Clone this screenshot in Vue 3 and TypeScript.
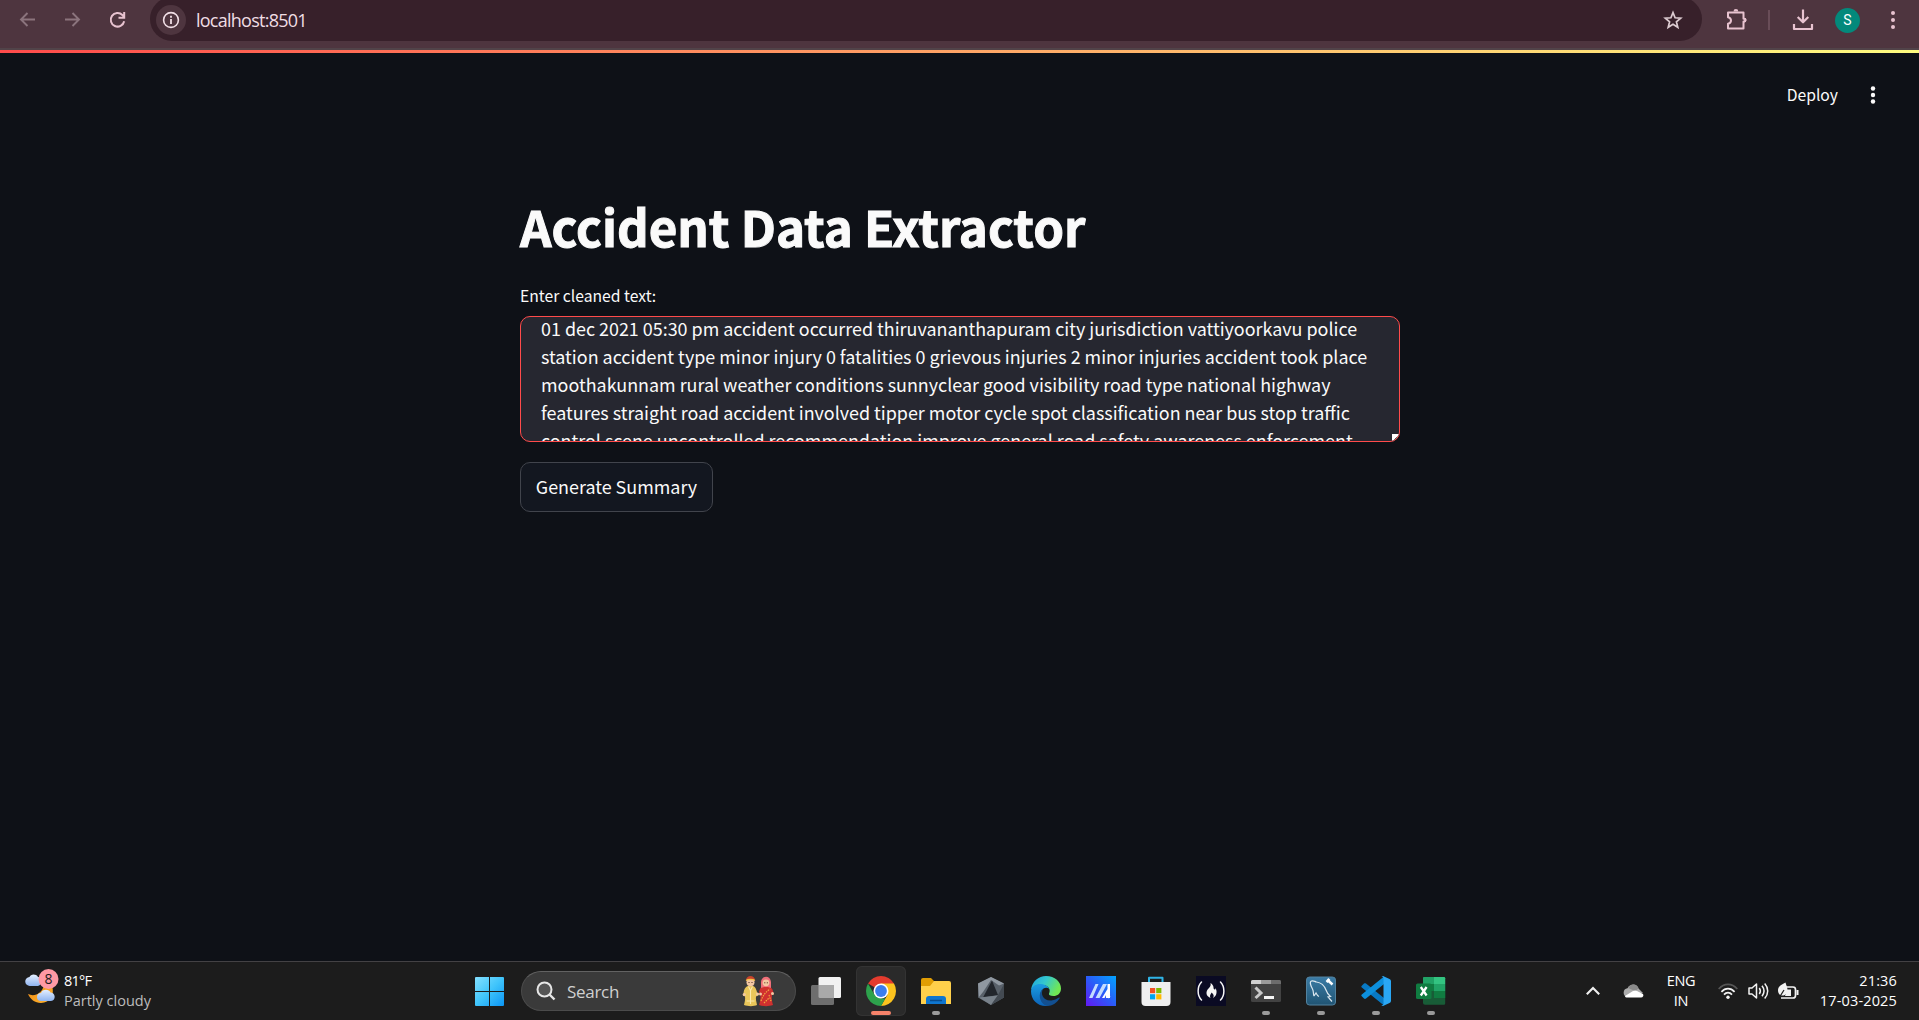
<script setup lang="ts">
interface TaskApp {
  id: string
  running: boolean
  active?: boolean
}

const lines: string[] = [
  '01 dec 2021 05:30 pm accident occurred thiruvananthapuram city jurisdiction vattiyoorkavu police',
  'station accident type minor injury 0 fatalities 0 grievous injuries 2 minor injuries accident took place',
  'moothakunnam rural weather conditions sunnyclear good visibility road type national highway',
  'features straight road accident involved tipper motor cycle spot classification near bus stop traffic',
  'control scene uncontrolled recommendation improve general road safety awareness enforcement',
]

const apps: TaskApp[] = [
  { id: 'taskview', running: false },
  { id: 'chrome', running: true, active: true },
  { id: 'explorer', running: true },
  { id: 'armoury', running: false },
  { id: 'edge', running: false },
  { id: 'myasus', running: false },
  { id: 'store', running: false },
  { id: 'fcc', running: false },
  { id: 'terminal', running: true },
  { id: 'mysql', running: true },
  { id: 'vscode', running: true },
  { id: 'excel', running: true },
]
</script>

<template>
  <div class="screen">
    <header class="toolbar">
      <nav class="nav">
        <svg width="20" height="20" viewBox="0 0 20 20" fill="none" stroke="#8b747d" stroke-width="1.9"><path d="M17 9.500H3.500M9.500 3 3 9.500l6.500 6.500" /></svg>
        <svg width="20" height="20" viewBox="0 0 20 20" fill="none" stroke="#8b747d" stroke-width="1.9"><path d="M2 9.500h13.500M9.500 3 16 9.500 9.500 16" /></svg>
        <svg width="20" height="20" viewBox="0 0 20 20" fill="none" stroke="#e8c3d0" stroke-width="2"><path d="M16.200 11.300A6.800 6.800 0 1 1 14.400 5L16.100 6.900M16.200 2V7.700H10.500" /></svg>
      </nav>
      <div class="omnibox">
        <span class="info">
          <svg width="18" height="18" viewBox="0 0 18 18"><circle cx="9" cy="9" r="7.400" fill="none" stroke="#f1dfe6" stroke-width="1.600" /><path d="M9 8v5M9 4.800v1.900" stroke="#f1dfe6" stroke-width="1.800" /></svg>
        </span>
        <span class="url">localhost:8501</span>
        <svg class="star" width="20" height="20" viewBox="0 0 20 20" fill="none" stroke="#dccbd1" stroke-width="1.700"><path d="M10 2.600l2.100 5.200 5.600.4-4.300 3.600 1.400 5.500L10 14.300l-4.800 3 1.400-5.500L2.300 8.200l5.600-.4z" /></svg>
      </div>
      <div class="tools">
        <svg width="22" height="22" viewBox="0 0 22 22" fill="none" stroke="#e8c3d0" stroke-width="2" stroke-linejoin="round"><path d="M2 3.500h15.500v6.200c2.500-.5 2.500 3.200 0 2.800v7H2v-4.800c4-.8 4-5.600 0-6.400z" /><path d="M7.500 2.500a2.400 2.400 0 0 1 4.800 0zM18.200 8.700a2.300 2.300 0 0 1 0 4.600z" fill="#e8c3d0" stroke="none" /></svg>
        <i class="sep"></i>
        <svg class="dl" width="22" height="22" viewBox="0 0 22 22" fill="none" stroke="#e8c3d0" stroke-width="2.200"><path d="M11 .5v13M5.700 8l5.300 5.300L16.300 8M2 15v5h18v-5" stroke-linejoin="round" /></svg>
        <span class="avatar">S</span>
        <svg class="kebab" width="6" height="20" viewBox="0 0 6 20" fill="#e8c3d0"><circle cx="3" cy="3" r="2" /><circle cx="3" cy="10" r="2" /><circle cx="3" cy="17" r="2" /></svg>
      </div>
    </header>
    <div class="rainbow"></div>

    <main class="page">
      <div class="appbar">
        <span>Deploy</span>
        <svg width="6" height="20" viewBox="0 0 6 20" fill="#fafafa"><circle cx="3" cy="3.500" r="2.200" /><circle cx="3" cy="10" r="2.200" /><circle cx="3" cy="16.500" r="2.200" /></svg>
      </div>
      <section class="column">
        <h1>Accident Data Extractor</h1>
        <label>Enter cleaned text:</label>
        <div class="textarea">
          <div class="scroll">
            <p v-for="line in lines" :key="line">{{ line }}</p>
          </div>
          <svg class="grip" width="7" height="7" viewBox="0 0 7 7"><path d="M0 0h7v3L3 7H0z" fill="#fff" /><path d="M2 6l3-3M4.500 6.500L7 4" stroke="#555" stroke-width="1" /></svg>
        </div>
        <button>Generate Summary</button>
      </section>
    </main>

    <footer class="taskbar">
      <div class="weather">
        <svg width="36" height="38" viewBox="0 0 36 38">
          <defs>
            <linearGradient id="cl" x1="0" y1="0" x2="0" y2="1"><stop offset="0" stop-color="#e4efff" /><stop offset="1" stop-color="#8fb4f0" /></linearGradient>
            <linearGradient id="mo" x1="0" y1="0" x2="1" y2="1"><stop offset="0" stop-color="#f08a16" /><stop offset="1" stop-color="#ffb52e" /></linearGradient>
          </defs>
          <path d="M3 26c6 3 14 0 16-9l8 1c3 8-2 17-11 17-6 0-11-4-13-9z" fill="url(#mo)" />
          <path d="M5 18a4.500 4.500 0 0 1-.5-9C5.500 6 11 5.500 13 9c4 0 5 8 0 9z" fill="url(#cl)" />
          <path d="M16 33a4 4 0 0 1 0-8c1-4 8-4.500 9.500-.5 5 0 6 8 .5 8.500z" fill="url(#cl)" />
          <circle cx="23.500" cy="11" r="10" fill="#ff99a4" />
          <text x="23.500" y="16" text-anchor="middle" font-family="Open Sans, sans-serif" font-size="14" fill="#1c1c1c">8</text>
        </svg>
        <div class="wtext"><b>81°F</b><span>Partly cloudy</span></div>
      </div>

      <div class="center">
        <div class="start">
          <svg width="29" height="29" viewBox="0 0 29 29">
            <defs><linearGradient id="win" x1="0" y1="0" x2="1" y2="1"><stop offset="0" stop-color="#84e0ff" /><stop offset=".5" stop-color="#3fc4fb" /><stop offset="1" stop-color="#0b95f5" /></linearGradient></defs>
            <path d="M1 0h13v14H0V1a1 1 0 0 1 1-1zM15 0h13a1 1 0 0 1 1 1v13H15zM0 15h14v14H1a1 1 0 0 1-1-1zM15 15h14v13a1 1 0 0 1-1 1H15z" fill="url(#win)" />
          </svg>
        </div>
        <div class="search">
          <svg width="20" height="20" viewBox="0 0 20 20" fill="#555" stroke="#e6e6e6" stroke-width="2"><circle cx="8.500" cy="8.500" r="7" /><path d="M13.500 13.500l5 5" stroke-width="2.400" /></svg>
          <span>Search</span>
          <svg class="couple" width="33" height="32" viewBox="0 0 33 32">
            <path d="M6.500 11c-2 0-3.500 1.500-4.500 4.500l-1 5 2 1c.5 3-.5 6-1 8.500 4 1.500 10 1.500 13 0-.5-3-1.500-5.500-1-8.500l2-1-1.500-5c-1-3-2-4.500-4-4.500z" fill="#e9c65a" />
            <path d="M6.500 11.500l2 4 2-4M8.500 15v14M4.500 26h8" stroke="#fbe9ad" stroke-width="1.100" fill="none" />
            <circle cx="8.500" cy="7.300" r="4" fill="#f3c8a2" /><path d="M4 5.500c0-6 9-6 9 0-2-1.200-7-1.200-9 0z" fill="#c9442c" /><path d="M4 5.400c2-1.300 7-1.300 9 0" stroke="#f4c44b" stroke-width="1.200" fill="none" /><path d="M6.500 7.500h1M9.500 7.500h1" stroke="#4a2c1c" stroke-width="1" />
            <path d="M19.500 12c-1.500 1-2 3-2.500 5l1.500 3c0 4-.5 7-1.500 10 4 1.500 10 1.500 14 0-1-3-1.500-7-1-10l1.500-2c-.5-3-1.500-5-3.500-6z" fill="#d0302f" />
            <path d="M19 13V7c.5-7 9.500-7 10 0v6l-3-1h-4z" fill="#f0707a" /><circle cx="24" cy="7.800" r="3.400" fill="#f3c8a2" /><path d="M22.300 7.800h1M24.800 7.800h1" stroke="#4a2c1c" stroke-width="1" />
            <path d="M19 26c2-6 5-9 9-12M27 20l2 6M22 28l5-5" stroke="#f3a83e" stroke-width="1.200" fill="none" stroke-dasharray="1.500 1" />
            <circle cx="2.300" cy="19.500" r="1.600" fill="#f3c8a2" /><circle cx="15.500" cy="19" r="1.600" fill="#f3c8a2" /><circle cx="18.500" cy="19" r="1.500" fill="#f3c8a2" /><circle cx="30.500" cy="18.500" r="1.500" fill="#f3c8a2" />
          </svg>
        </div>

        <div v-for="app in apps" :key="app.id" class="slot" :class="{ active: app.active }">
          <svg v-if="app.id === 'taskview'" width="30" height="30" viewBox="0 0 30 30"><rect x="7.500" y="1" width="22.500" height="21" rx="1.500" fill="#f1f1f1" /><rect y="9" width="23" height="20" rx="1.500" fill="#6e6e6e" /><path d="M7.500 9H23v13H9a1.500 1.500 0 0 1-1.500-1.500z" fill="#a9a9a9" /></svg>

          <svg v-else-if="app.id === 'chrome'" width="30" height="30" viewBox="0 0 30 30"><path d="M15 15L2.010 7.500A15 15 0 0 1 27.990 7.500z" fill="#e33b2e" /><path d="M15 7.500h12.990A15 15 0 0 1 15 30l6.500-11.250z" fill="#fcc31e" /><path d="M2.010 7.500L8.500 18.750 15 22.500h4.330L15 30A15 15 0 0 1 2.010 7.500z" fill="#2da24c" /><circle cx="15" cy="15" r="7.500" fill="#fff" /><circle cx="15" cy="15" r="5.900" fill="#3b7ded" /></svg>

          <svg v-else-if="app.id === 'explorer'" width="30" height="30" viewBox="0 0 30 30"><path d="M0 4a2 2 0 0 1 2-2h8l3 3h15v8H0z" fill="#e09d04" /><path d="M0 10h9l4-5h15a2 2 0 0 1 2 2v21H0z" fill="#ffd04b" /><path d="M5 28v-5a3 3 0 0 1 3-3h14a3 3 0 0 1 3 3v5z" fill="#0f76cf" /><path d="M9 24.500h12" stroke="#074b8d" stroke-width="1.500" /></svg>

          <svg v-else-if="app.id === 'armoury'" width="30" height="30" viewBox="0 0 30 30"><path d="M15 1l13 6.500v14L15 29 2 21.500v-14z" fill="#59616a" /><path d="M15 1l13 6.500-5 2L15 4 7 16l-4 5-1-13.500z" fill="#9098a1" /><path d="M16 4.500l6 14.500-15 2.500z" fill="#22262c" /><path d="M3 21.500l19-2-7 9.500z" fill="#78818a" /><path d="M22 19l6-11v13.500L15 29z" fill="#434a52" /></svg>

          <svg v-else-if="app.id === 'edge'" width="30" height="30" viewBox="0 0 30 30">
            <defs>
              <linearGradient id="eg" x1="0" y1="0" x2="1" y2=".4"><stop offset="0" stop-color="#1da2de" /><stop offset=".5" stop-color="#34c8cf" /><stop offset="1" stop-color="#70e754" /></linearGradient>
              <linearGradient id="eb" x1="0" y1="0" x2="0" y2="1"><stop offset="0" stop-color="#1b9de2" /><stop offset="1" stop-color="#0b62b8" /></linearGradient>
            </defs>
            <path d="M0 14C1 5.500 7.500 0 15 0c9 0 15 6 15 12.500 0 5-3.800 7.500-7.500 7.500-3.500 0-5-1.300-4.500-2.500 2-3.500-.5-7.500-4-8C8 8.500 2 10 0 14z" fill="url(#eg)" />
            <path d="M0 15C.5 10.500 4.500 8 9 8c4 0 8 2 9.500 5-3-2.500-7-1-8.500 3-2 6 2 12 8 13.700C8 31.500 0 25 0 15z" fill="url(#eb)" />
            <path d="M12.500 12.500c-4 5 0 13 8 12 3-.3 5-1.500 7.500-3 .7-.4 1 .3.500 1C26 27 21 30 16.500 30 9.500 28.500 7 20 10 15c.7-1.200 1.500-2 2.500-2.500z" fill="#124f90" />
          </svg>

          <svg v-else-if="app.id === 'myasus'" width="30" height="30" viewBox="0 0 30 30"><defs><linearGradient id="ma" x1="0" y1="1" x2="1" y2="0"><stop offset="0" stop-color="#6318f2" /><stop offset=".5" stop-color="#2a5cf8" /><stop offset="1" stop-color="#02a5ff" /></linearGradient></defs><path d="M0 0h30v30H0z" fill="url(#ma)" /><path d="M3 22L9.500 8h3L6.500 22zM9.500 22L17 8h4l-7.500 14z" fill="#c3dcff" /><path d="M16 22l5.500-9V8H24v14h-4v-3l-1.500 3z" fill="#fff" /><circle cx="22.500" cy="20.500" r="1.700" fill="#fff" /></svg>

          <svg v-else-if="app.id === 'store'" width="30" height="30" viewBox="0 0 30 30"><path d="M8 8V1.800h13.500V8" fill="none" stroke="#2fb4e6" stroke-width="2" stroke-linejoin="round" /><path d="M.5 6h29v20a4 4 0 0 1-4 4h-21a4 4 0 0 1-4-4z" fill="#efefef" /><path d="M9 12h5.200v5.200H9z" fill="#f25022" /><path d="M15.200 12h5.200v5.200h-5.200z" fill="#7fba00" /><path d="M9 18.200h5.200v5.200H9z" fill="#00a4ef" /><path d="M15.200 18.200h5.200v5.200h-5.200z" fill="#ffb900" /></svg>

          <svg v-else-if="app.id === 'fcc'" width="30" height="30" viewBox="0 0 30 30"><path d="M0 0h30v30H0z" fill="#0a0a23" /><path d="M5.500 6C1 10.500 1 19.500 5.500 24M24.500 6c4.500 4.500 4.500 13.500 0 18" fill="none" stroke="#f5f5f5" stroke-width="1.500" stroke-linecap="round" /><path d="M14.500 7c4.500 3 2 5.500 4 6.500 1 .3 1-.8.8-1.500 2.200 2.700 1.700 8-2.300 10 1.500-2.500.5-4-1.500-5.500-.5 2-2.200 2.500-1 5.500-5-2-4.800-6.500-2.200-9.200C14.500 10.500 15 9.500 14.500 7z" fill="#f5f5f5" /></svg>

          <svg v-else-if="app.id === 'terminal'" width="30" height="30" viewBox="0 0 30 30"><rect y="4" width="30" height="22" rx="1.500" fill="#424242" /><path d="M0 5.500A1.500 1.500 0 0 1 1.500 4H10v4H0z" fill="#cfcfcf" /><path d="M10 4h10v4H10z" fill="#9b9b9b" /><path d="M20 4h8.500A1.500 1.500 0 0 1 30 5.500V8H20z" fill="#6c6c6c" /><path d="M4.500 11.500L10 17l-5.500 5" fill="none" stroke="#c8c8c8" stroke-width="3" /><path d="M13 20h10v3H13z" fill="#f5f5f5" /></svg>

          <svg v-else-if="app.id === 'mysql'" width="30" height="30" viewBox="0 0 30 30"><defs><linearGradient id="my" x1="0" y1="0" x2="0" y2="1"><stop offset="0" stop-color="#3b7ca6" /><stop offset="1" stop-color="#205473" /></linearGradient></defs><rect x=".5" y="1" width="29" height="28" rx="3" fill="url(#my)" stroke="#52829f" /><path d="M8 20c-1-2 0-4-1.500-7C5 10 3 6 5.500 5c2-.7 3 .5 5 1 5 .7 8 4 9.500 8 1 3 2.500 5 4.500 6.500l-2.500.5 4 4.500M8 20l2-3c1 2 1.500 3 3 3.500" fill="none" stroke="#dbe7ef" stroke-width="1.200" /><path d="M21 3.500l5.500 5M20.500 6l3-3" stroke="#fff" stroke-width="2.500" /></svg>

          <svg v-else-if="app.id === 'vscode'" width="30" height="30" viewBox="0 0 30 30"><path d="M1 9.500l2-2c.7-.5 1.300-.5 2 0L23 22v7.500L.8 11.500c-.8-.7-.5-1.500.2-2z" fill="#0879c4" /><path d="M1 20.500l2 2c.7.500 1.300.5 2 0L23 8V.5L.8 18.500c-.8.700-.5 1.500.2 2z" fill="#0d8fdc" /><path d="M22 0l6.500 3A2.500 2.500 0 0 1 30 5v20a2.500 2.500 0 0 1-1.500 2L22 30c-.7 0-1.200-.5-1.500-1 1.300.5 2-.3 2-1.500v-25c0-1.200-.7-2-2-1.500.3-.5.800-1 1.500-1z" fill="#2aa7f4" /></svg>

          <svg v-else width="30" height="30" viewBox="0 0 30 30"><path d="M8 1h20a1.200 1.200 0 0 1 1.200 1.200V27.500A1.200 1.200 0 0 1 28 28.700H9a2 2 0 0 1-2-2V2a1 1 0 0 1 1-1z" fill="#185c37" /><path d="M8 1h10v7H7V2a1 1 0 0 1 1-1z" fill="#21a366" /><path d="M18 1h10a1.200 1.200 0 0 1 1.200 1.200V8H18z" fill="#33c481" /><path d="M18 8h11.200v7H18z" fill="#21a366" /><path d="M7 8h11v7H7zM18 15h11.200v7H18z" fill="#107c41" /><rect y="7.500" width="15.500" height="15.500" rx="1.500" fill="#107c41" /><path d="M4.800 11l5.800 8.500M10.600 11l-5.800 8.500" stroke="#fff" stroke-width="2.300" /></svg>
          <i v-if="app.running" class="dot"></i>
        </div>
      </div>

      <div class="tray">
        <svg class="chev" width="16" height="10" viewBox="0 0 16 10" fill="none" stroke="#f0f0f0" stroke-width="2.100"><path d="M1.800 8.300L8 2l6.200 6.300" /></svg>
        <svg class="cloud" width="21" height="14" viewBox="0 0 21 14"><path d="M4 13a4.500 4.500 0 0 1 .5-8.800C7-.5 14-.8 15.500 4.500L20 9z" fill="#ababab" /><path d="M5 3.900C7.500-.7 14-.6 15.600 4.500L12 7z" fill="#8a8a8a" /><path d="M2 12l8-5c1-.7 3-.8 4 0l6 3c1 1.500 0 3.500-2 3.500H4C3 13.500 2 13 2 12z" fill="#fff" /></svg>
        <div class="lang"><span>ENG</span><span>IN</span></div>
        <svg class="wifi" width="20" height="17" viewBox="0 0 20 17" fill="none" stroke="#f2f2f2" stroke-width="1.700"><path d="M.7 6C6-.2 14-.2 19.300 6" stroke="#555" /><path d="M3.400 8.800c4-4.300 9.200-4.300 13.200 0M6 11.600c2.400-2.700 5.600-2.700 8 0" /><circle cx="10" cy="14.200" r="1.700" fill="#f2f2f2" stroke="none" /></svg>
        <svg class="sound" width="21" height="18" viewBox="0 0 21 18" fill="none" stroke="#f2f2f2" stroke-width="1.500"><path d="M1 6h3l4.500-4v14L4 12H1zM11.300 6c1.300 1.800 1.300 4.200 0 6M14 3.800c2.500 3.200 2.500 7.200 0 10.400M16.700 1.500c4 4.500 4 10.500 0 15" stroke-linejoin="round" /></svg>
        <svg class="batt" width="21" height="19" viewBox="0 0 21 19"><path d="M8 5h7a2.500 2.500 0 0 1 2.500 2.500v6A2.500 2.500 0 0 1 15 16H3" fill="none" stroke="#f2f2f2" stroke-width="1.700" /><path d="M18.500 8h2v5h-2zM9 7.500h4v6.500H7z" fill="#f2f2f2" /><path d="M7.500.500C4 3 0 3.500 0 8.500c0 3 2 5 4.500 5s5-2 5-5.500c0-3-1.500-5-2-7.500z" fill="#f2f2f2" /><path d="M1 16l5-8" stroke="#1c1c1c" stroke-width="1.200" /></svg>
        <div class="clock"><span>21:36</span><span>17-03-2025</span></div>
      </div>
    </footer>
  </div>
</template>

<style>
html,
body {
  margin: 0;
  background: #0e1117;
  overflow: hidden;
}
</style>

<style scoped>
* {
  box-sizing: border-box;
}
svg {
  display: block;
  flex: none;
}
.screen {
  width: 1919px;
  height: 1020px;
  display: flex;
  flex-direction: column;
  overflow: hidden;
  background: #0e1117;
  color: #fafafa;
  font-family: "Noto Sans CJK SC", "Noto Sans", sans-serif;
  white-space: nowrap;
}
.toolbar {
  height: 50px;
  flex: none;
  display: flex;
  align-items: flex-start;
  background: #4e353f;
  border-bottom: 2px solid #514349;
}
.nav {
  width: 150px;
  padding: 10px 0 0 18px;
  display: flex;
  gap: 25px;
}
.omnibox {
  width: 1552px;
  height: 44px;
  margin-top: -3px;
  padding: 1px 19px 0 6px;
  border-radius: 22px;
  background: #37202a;
  display: flex;
  align-items: center;
}
.info {
  width: 30px;
  height: 30px;
  border-radius: 50%;
  background: #4e353f;
  display: flex;
  align-items: center;
  justify-content: center;
}
.url {
  margin-left: 10px;
  font: 18px/24px "Open Sans", "Noto Sans", sans-serif;
  letter-spacing: -0.75px;
  color: #efdde4;
}
.star {
  margin-left: auto;
}
.tools {
  flex: 1;
  height: 40px;
  padding-left: 24px;
  display: flex;
  align-items: center;
}
.sep {
  width: 2px;
  height: 20px;
  margin-left: 20px;
  background: #694d58;
}
.dl {
  margin-left: 22px;
}
.avatar {
  width: 25px;
  height: 25px;
  margin-left: 21px;
  border-radius: 50%;
  background: #03897b;
  color: #fff;
  font: 14px/25px Roboto, sans-serif;
  text-align: center;
}
.kebab {
  margin-left: 30px;
}
.rainbow {
  height: 3px;
  flex: none;
  background: linear-gradient(90deg, #ff4b4b, #fffd80);
}
.page {
  flex: 1;
  display: flex;
  flex-direction: column;
}
.appbar {
  height: 84px;
  padding-right: 43px;
  display: flex;
  align-items: center;
  justify-content: flex-end;
  gap: 32px;
  font-size: 15.700px;
}
.appbar span {
  padding-bottom: 2px;
}
.column {
  width: 880px;
  margin-left: 520px;
  display: flex;
  flex-direction: column;
  align-items: flex-start;
}
h1 {
  margin: 56px 0 0;
  font-size: 49.250px;
  font-weight: 700;
  line-height: 66px;
  -webkit-text-stroke: 1px #fafafa;
}
label {
  margin-top: 25px;
  font-size: 15.700px;
  line-height: 24px;
}
.textarea {
  position: relative;
  width: 880px;
  height: 126px;
  margin-top: 8px;
  border: 1px solid #ff4b4b;
  border-radius: 10px;
  background: #262730;
  overflow: hidden;
}
.scroll {
  padding-left: 20px;
  margin-top: -3px;
}
p {
  margin: 0;
  font-size: 17.920px;
  line-height: 28px;
}
.grip {
  position: absolute;
  right: 0;
  bottom: 0;
}
button {
  width: 193px;
  height: 50px;
  margin-top: 20px;
  padding: 0 0 3px;
  border: 1px solid #41444c;
  border-radius: 10px;
  background: #131720;
  color: #fafafa;
  font-family: inherit;
  font-size: 17.920px;
}
.taskbar {
  height: 59px;
  flex: none;
  display: flex;
  align-items: stretch;
  border-top: 1px solid #434144;
  background: #1c1c1c;
  font-family: "Open Sans", "Noto Sans", sans-serif;
}
.weather {
  width: 462px;
  padding: 6px 0 0 25px;
  display: flex;
}
.wtext {
  margin-left: 3px;
  display: flex;
  flex-direction: column;
  font-size: 14.500px;
  line-height: 20px;
  letter-spacing: 0;
  padding-top: 3px;
}
.wtext b {
  font-weight: 400;
  color: #fff;
  letter-spacing: -0.8px;
}
.wtext span {
  color: #bdbdbd;
}
.center {
  display: flex;
}
.start {
  width: 59px;
  padding: 15px 0 0 13px;
}
.search {
  width: 275px;
  height: 40px;
  margin: 9px 2px 0 0;
  padding: 0 20px 0 14px;
  display: flex;
  align-items: center;
  border: 1px solid #4b4b4b;
  border-top-color: #626262;
  border-radius: 20px;
  background: #3a3a3a;
  font-size: 17px;
  color: #d0d0d0;
}
.search span {
  margin-left: 11px;
  letter-spacing: -0.300px;
}
.couple {
  margin-left: auto;
}
.slot {
  width: 50px;
  height: 50px;
  margin: 4px 2.500px 0;
  padding-top: 10px;
  display: flex;
  flex-direction: column;
  align-items: center;
  border-radius: 6px;
}
.slot.active {
  background: #2a2a2a;
  box-shadow: inset 0 0 0 1px #333;
}
.dot {
  width: 8px;
  height: 4px;
  margin-top: 5px;
  border-radius: 2px;
  background: #9a9a9a;
}
.active .dot {
  width: 20px;
  background: #f5826a;
}
.tray {
  margin-left: auto;
  padding-right: 22px;
  display: flex;
  align-items: center;
}
.cloud {
  margin-left: 22px;
}
.lang,
.clock {
  display: flex;
  flex-direction: column;
  font-size: 14.500px;
  line-height: 20px;
  color: #fff;
}
.lang {
  width: 30px;
  margin-left: 22px;
  align-items: center;
  letter-spacing: -0.300px;
}
.wifi {
  margin-left: 22px;
}
.sound {
  margin-left: 10px;
}
.batt {
  margin-left: 9px;
}
.clock {
  width: 78px;
  margin-left: 20px;
  align-items: flex-end;
  letter-spacing: 0.150px;
}
</style>
